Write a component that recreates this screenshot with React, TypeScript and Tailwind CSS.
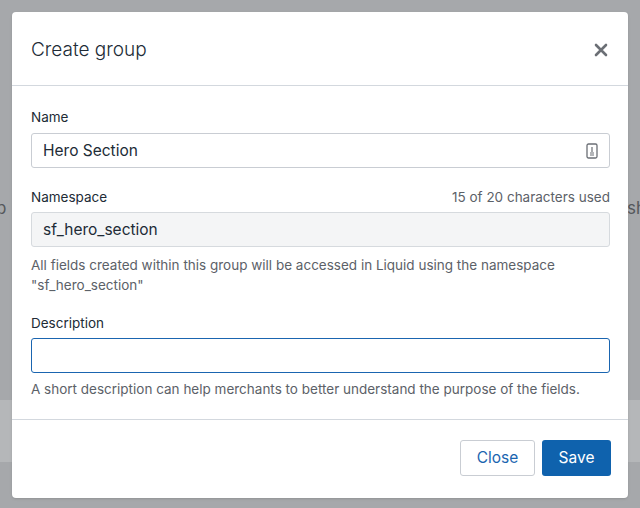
export default function App() {
  return (
    <div className="relative w-[640px] h-[508px] bg-[#a6a8ab] overflow-hidden" style={{ fontFamily: "Inter, 'Noto Sans', sans-serif" }}>
      <div className="absolute left-0 right-0 top-[400px] h-[62px] bg-[#b5b7b9]" />
      <div className="absolute left-[-8px] top-[196px] text-[17px] text-[#55585c]">lp</div>
      <div className="absolute right-[-6px] top-[196px] text-[17px] text-[#55585c]">sh</div>
      <div className="absolute left-[12px] top-[12px] w-[616px] h-[486px] bg-white rounded-[4px] shadow flex flex-col text-[#212b36]">
        <div className="h-[74px] border-b border-[#d3d8de] flex items-center justify-between pl-[19px] pr-[20px] pt-[3px]">
          <div className="text-[19px] font-light text-[#212b36]">Create group</div>
          <svg width="14" height="14" viewBox="0 0 14 14"><path d="M2 2L12 12M12 2L2 12" stroke="#6b6f75" strokeWidth="2.6" strokeLinecap="round" /></svg>
        </div>
        <div className="pl-[19px] pr-[18px] pt-[22px] flex flex-col">
          <div className="text-[13.5px] leading-[18px]">Name</div>
          <div className="mt-[7px] h-[35px] border border-[#c9cdd3] rounded-[3px] flex items-center justify-between px-[11px]">
            <span className="text-[15.5px]">Hero Section</span>
            <svg width="12" height="16" viewBox="0 0 12 16"><rect x="1" y="1" width="10" height="14" rx="1.5" fill="none" stroke="#6b6f75" strokeWidth="1.3" /><path d="M6 4v5M4 10h4M4 12h4" stroke="#6b6f75" strokeWidth="1.2" /></svg>
          </div>
          <div className="mt-[20px] flex justify-between text-[13.5px] leading-[18px]">
            <span>Namespace</span><span className="text-[#5c6168]">15 of 20 characters used</span>
          </div>
          <div className="mt-[6px] h-[35px] border border-[#d6dade] bg-[#f4f5f6] rounded-[3px] flex items-center px-[11px] text-[15.5px]">sf_hero_section</div>
          <div className="mt-[8px] text-[13.5px] leading-[20px] text-[#5c6168]">All fields created within this group will be accessed in Liquid using the namespace "sf_hero_section"</div>
          <div className="mt-[19px] text-[13.5px] leading-[18px]">Description</div>
          <div className="mt-[6px] h-[35px] border border-[#1a65b0] rounded-[3px]" />
          <div className="mt-[7px] text-[13.5px] leading-[18px] text-[#5c6168]">A short description can help merchants to better understand the purpose of the fields.</div>
        </div>
        <div className="mt-[21px] border-t border-[#d3d8de] flex justify-end gap-[7px] px-[17px] pt-[20px]">
          <button className="w-[75px] h-[36px] border border-[#c9cdd3] rounded-[3px] text-[#1a65b0] text-[15.5px]">Close</button>
          <button className="w-[69px] h-[36px] bg-[#0f62ad] rounded-[3px] text-white text-[15.5px]">Save</button>
        </div>
      </div>
    </div>
  );
}
